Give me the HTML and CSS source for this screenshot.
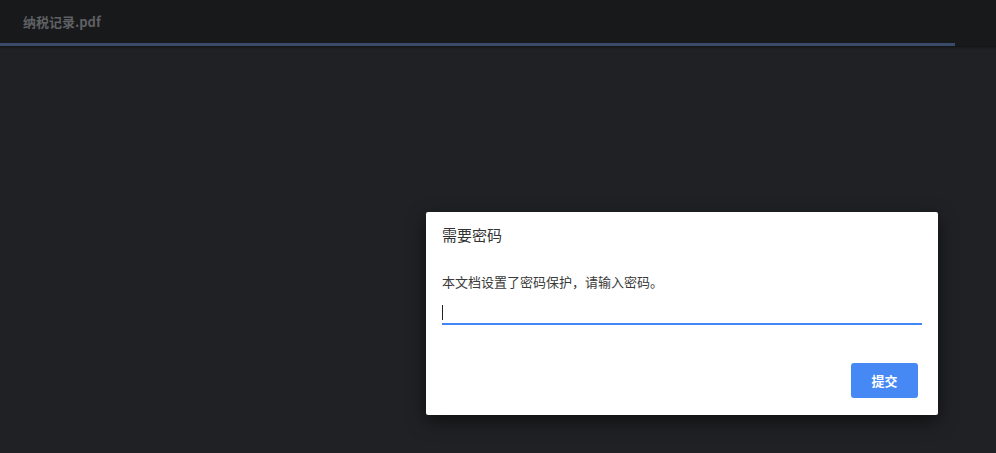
FILE: index.html
```html
<!DOCTYPE html>
<html lang="zh-CN">
<head>
<meta charset="utf-8">
<title>纳税记录.pdf</title>
<link rel="stylesheet" href="styles.css">
</head>
<body>
<div class="app">
  <header class="toolbar">
    <span class="doc-title">纳税记录.pdf</span>
  </header>
  <div class="progress"><div class="progress-fill" style="width: 95.9%"></div></div>
  <main class="viewer"></main>
</div>
<div class="dialog" role="dialog">
  <div class="dialog-title">需要密码</div>
  <div class="dialog-text">本文档设置了密码保护，请输入密码。</div>
  <div class="field"><span class="caret"></span></div>
  <div class="actions"><button class="submit" type="button">提交</button></div>
</div>
</body>
</html>
```
FILE: styles.css
```css
html, body {
  margin: 0;
  height: 100%;
}
body {
  background: #202124;
  font-family: "Noto Sans CJK SC", "Noto Sans", sans-serif;
  overflow: hidden;
}
.app {
  display: flex;
  flex-direction: column;
  height: 100%;
}
.toolbar {
  height: 43px;
  background: #18191b;
  display: flex;
  align-items: center;
  padding-left: 23px;
}
.doc-title {
  font-family: "Noto Sans CJK SC", "Liberation Sans", sans-serif;
  font-size: 13px;
  font-weight: bold;
  color: #5f6063;
}
.progress {
  height: 3px;
  background: #18191b;
}
.progress-fill {
  height: 100%;
  background: #3a4a69;
}
.viewer {
  flex: 1;
  background: #202124;
  box-shadow: inset 0 3px 3px -2px rgba(0, 0, 0, 0.5);
}
.dialog {
  position: absolute;
  left: 426px;
  top: 212px;
  width: 512px;
  height: 203px;
  box-sizing: border-box;
  padding: 13px 16px 17px;
  background: #ffffff;
  border-radius: 2px;
  box-shadow: 0 6px 18px rgba(0, 0, 0, 0.55);
  display: flex;
  flex-direction: column;
}
.dialog-title {
  font-size: 15px;
  line-height: 20px;
  color: #333333;
}
.dialog-text {
  margin-top: 29px;
  font-size: 13px;
  line-height: 16px;
  color: #3a3a3a;
  text-spacing-trim: space-all;
  font-feature-settings: "fwid" 1;
}
.field {
  margin-top: 8px;
  height: 25px;
  border-bottom: 2px solid #4285f4;
  display: flex;
  align-items: flex-start;
}
.caret {
  margin-top: 7px;
  width: 1px;
  height: 15px;
  background: #222222;
}
.actions {
  margin-top: 38px;
  display: flex;
  justify-content: flex-end;
  padding-right: 4px;
}
.submit {
  width: 67px;
  height: 35px;
  border: none;
  border-radius: 3px;
  background: #4688f4;
  color: #ffffff;
  font-family: "Noto Sans CJK SC", sans-serif;
  font-size: 13px;
  font-weight: bold;
  padding: 0;
}
```
